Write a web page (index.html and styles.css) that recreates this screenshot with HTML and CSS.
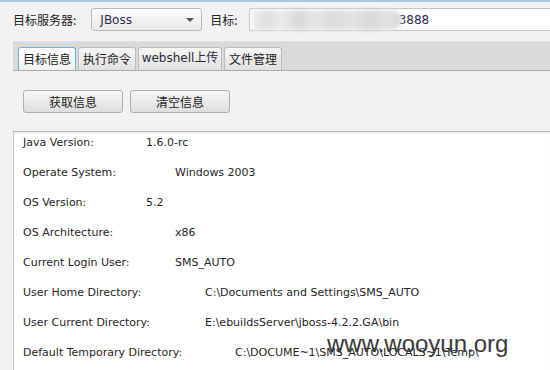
FILE: index.html
```html
<!DOCTYPE html>
<html>

<head>
	<meta charset="UTF-8">
	<title>JBoss</title>
	<link rel="stylesheet" href="styles.css">
</head>

<body>
	<div class="window">
		<div class="target-bar">
			<span class="label">目标服务器:</span>
			<div class="combo">
				<span>JBoss</span>
				<svg class="arrow" viewBox="0 0 8 4"><path fill="#555" d="M0 0h8L4 4z"></path></svg>
			</div>
			<span class="label label-url">目标:</span>
			<div class="url">
				<span class="url-text">3888</span>
				<div class="mask"></div>
			</div>
		</div>

		<div class="tabs">
			<span class="tab active">目标信息</span>
			<span class="tab">执行命令</span>
			<span class="tab tab-wide">webshell上传</span>
			<span class="tab">文件管理</span>
		</div>

		<div class="actions">
			<button class="btn">获取信息</button>
			<button class="btn">清空信息</button>
		</div>

		<div class="output">
			<div class="row stop-1"><span class="key">Java Version:</span><span>1.6.0-rc</span></div>
			<div class="row stop-2"><span class="key">Operate System:</span><span>Windows 2003</span></div>
			<div class="row stop-1"><span class="key">OS Version:</span><span>5.2</span></div>
			<div class="row stop-2"><span class="key">OS Architecture:</span><span>x86</span></div>
			<div class="row stop-2"><span class="key">Current Login User:</span><span>SMS_AUTO</span></div>
			<div class="row stop-3"><span class="key">User Home Directory:</span><span>C:\Documents and Settings\SMS_AUTO</span></div>
			<div class="row stop-3"><span class="key">User Current Directory:</span><span>E:\ebuildsServer\jboss-4.2.2.GA\bin</span></div>
			<div class="row stop-4"><span class="key">Default Temporary Directory:</span><span>C:\DOCUME~1\SMS_AUTO\LOCALS~1\Temp\</span></div>
		</div>

		<div class="watermark">www.wooyun.org</div>
	</div>
</body>

</html>
```

FILE: styles.css
```css
html,
body {
	width: 100%;
	height: 100%;
	margin: 0;
	padding: 0;
	overflow: hidden;
	background: #f2f2f2;
	font-family: "DejaVu Sans", "Noto Sans CJK SC", sans-serif;
	font-size: 11px;
	color: #262626;
}

.window {
	position: relative;
	height: 100%;
	box-sizing: border-box;
	border-top: 2px solid #a9c6e4;
	display: flex;
	flex-direction: column;
}

/* top row */
.target-bar {
	display: flex;
	align-items: center;
	height: 23px;
	margin-top: 6px;
	padding-left: 13px;
}

.label {
	font-family: "Noto Sans CJK SC", sans-serif;
	font-size: 12px;
	color: #222;
}

.combo {
	box-sizing: border-box;
	width: 111px;
	height: 23px;
	margin-left: 15px;
	padding: 0 7px 0 8px;
	display: flex;
	align-items: center;
	justify-content: space-between;
	border: 1px solid #b9b9b9;
	border-radius: 3px;
	background: linear-gradient(#fdfdfd, #e9e9e9);
	font-size: 12px;
	color: #2c2c55;
}

.arrow {
	width: 8px;
	height: 4px;
}

.label-url {
	margin-left: 8px;
}

.url {
	position: relative;
	flex: 1;
	box-sizing: border-box;
	height: 23px;
	margin-left: 11px;
	padding-left: 149px;
	display: flex;
	align-items: center;
	background: #fff;
	border: 1px solid #c4c4c4;
	border-right: none;
	border-radius: 3px 0 0 3px;
	font-size: 12px;
	color: #2b2b50;
}

.mask {
	position: absolute;
	left: 2px;
	top: 1px;
	width: 150px;
	height: 20px;
	filter: blur(2px);
	background: linear-gradient(90deg, #f0f0f0 0, #dedede 14px, #ececec 30px, #d8d8d8 46px, #e6e6e6 62px, #dcdcdc 80px, #e3e3e3 98px, #d9d9d9 118px, #e2e2e2 136px, #d6d6d6 150px);
	border-radius: 0 10px 10px 0;
}

/* tabs */
.tabs {
	display: flex;
	gap: 2px;
	height: 23px;
	margin: 10px 0 0 13px;
	padding: 5px 0 0 5px;
	background: #dadada;
	border-top: 1px solid #e2e2e2;
	border-bottom: 1px solid #ababab;
}

.tab {
	box-sizing: border-box;
	width: 58px;
	height: 23px;
	line-height: 21px;
	text-align: center;
	font-family: "Noto Sans CJK SC", sans-serif;
	font-size: 12px;
	color: #222;
	border: 1px solid #bdbdbd;
	border-bottom: none;
	border-radius: 3px 3px 0 0;
	background: linear-gradient(#f6f6f6, #e1e1e1);
}

.tab-wide {
	width: 84px;
	font-family: "DejaVu Sans", "Noto Sans CJK SC", sans-serif;
	color: #2a2a3a;
}

.tab.active {
	border-color: #64b4e4;
	background: linear-gradient(#ffffff, #f1f1f1);
}

/* buttons */
.actions {
	display: flex;
	gap: 7px;
	margin: 19px 0 0 23px;
}

.btn {
	box-sizing: border-box;
	width: 100px;
	height: 23px;
	padding: 0;
	font-family: "Noto Sans CJK SC", sans-serif;
	font-size: 12px;
	color: #222;
	border: 1px solid #b0b0b0;
	border-radius: 3px;
	background: linear-gradient(#f8f8f8, #dedede);
}

/* output */
.output {
	flex: 1;
	margin: 18px 0 0 13px;
	padding: 1px 0 0 9px;
	background: #fff;
	border-top: 1px solid #b6b6b6;
	border-left: 1px solid #c6c6c6;
	box-shadow: inset 0 2px 2px -1px #e6e6e6;
}

.row {
	display: flex;
	height: 20px;
	line-height: 20px;
	margin-bottom: 10px;
	white-space: nowrap;
}

.key {
	flex: none;
}

.stop-1 .key {
	width: 123px;
}

.stop-2 .key {
	width: 152px;
}

.stop-3 .key {
	width: 182px;
}

.stop-4 .key {
	width: 212px;
}

.watermark {
	position: absolute;
	left: 327px;
	top: 328px;
	font-family: "Liberation Sans", sans-serif;
	font-size: 24px;
	color: #3a3a3a;
}
```
